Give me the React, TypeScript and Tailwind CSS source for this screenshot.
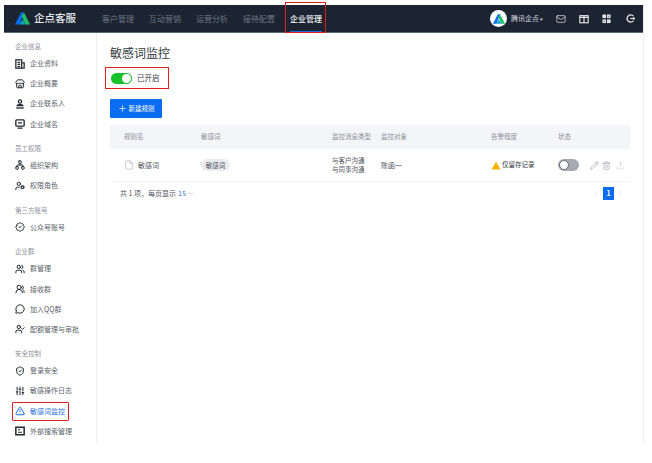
import React from "react";
import {
  Store, Network, UserCog, BadgeCheck, Users, UsersRound, MessageCircle, UserCheck,
  ShieldCheck, SlidersVertical, TriangleAlert, Mail,
  Plus, File, Pencil, Trash2, Upload, ChevronLeft, ChevronRight, ChevronDown,
} from "lucide-react";

const font = "font-['Noto_Sans_CJK_SC','Noto_Sans',sans-serif]";

type IconType = React.ComponentType<{ size?: number; strokeWidth?: number; className?: string }>;

const DocIcon: IconType = ({ size, className }) => (
  <svg width={size} height={size} viewBox="0 0 12 12" className={className} fill="none" stroke="currentColor" strokeWidth="1.5">
    <rect x="1" y="1" width="7" height="10" />
    <path d="M8 4.5 H11 V11 H8 M3 4 H6 M3 6.5 H6 M3 9 H6" />
  </svg>
);
const ContactIcon: IconType = ({ size, className }) => (
  <svg width={size} height={size} viewBox="0 0 12 12" className={className} fill="none" stroke="currentColor" strokeWidth="1.5">
    <circle cx="6" cy="3" r="2" />
    <path d="M2.5 8 C3 6.4 9 6.4 9.5 8 Z" />
    <path d="M1.5 10.8 H10.5" strokeWidth="1.6" />
  </svg>
);
const ScreenIcon: IconType = ({ size, className }) => (
  <svg width={size} height={size} viewBox="0 0 12 12" className={className} fill="none" stroke="currentColor" strokeWidth="1.6">
    <rect x="1" y="1" width="10" height="7.5" rx="1" />
    <path d="M3 11 H9 M3.5 4.7 H8.5" />
  </svg>
);
const SearchBoxIcon: IconType = ({ size, className }) => (
  <svg width={size} height={size} viewBox="0 0 12 12" className={className} fill="none" stroke="currentColor" strokeWidth="1.8">
    <rect x="1" y="1.5" width="10" height="9" />
    <path d="M3.6 4.5 H6 M3.6 7.5 H8.4" strokeWidth="1.2" />
  </svg>
);

const sections: { title: string; items: { label: string; Icon: IconType; active?: boolean }[]; top: string }[] = [
  { title: "企业信息", top: "pt-[8px]", items: [
    { label: "企业资料", Icon: DocIcon },
    { label: "企业概要", Icon: Store },
    { label: "企业联系人", Icon: ContactIcon },
    { label: "企业域名", Icon: ScreenIcon },
  ]},
  { title: "员工权限", top: "pt-[9px]", items: [
    { label: "组织架构", Icon: Network },
    { label: "权限角色", Icon: UserCog },
  ]},
  { title: "第三方账号", top: "pt-[9px]", items: [
    { label: "公众号账号", Icon: BadgeCheck },
  ]},
  { title: "企业群", top: "pt-[9px]", items: [
    { label: "群管理", Icon: Users },
    { label: "接收群", Icon: UsersRound },
    { label: "加入QQ群", Icon: MessageCircle },
    { label: "配额管理与审批", Icon: UserCheck },
  ]},
  { title: "安全控制", top: "pt-[9px]", items: [
    { label: "登录安全", Icon: ShieldCheck },
    { label: "敏感操作日志", Icon: SlidersVertical },
    { label: "敏感词监控", Icon: TriangleAlert, active: true },
    { label: "外部搜索管理", Icon: SearchBoxIcon },
  ]},
];

function Logo({ size }: { size: number }) {
  return (
    <svg width={size} height={size} viewBox="0 0 20 20">
      <path d="M0 18 L8 2 H12 L6 18 Z" fill="#0a6cf0" />
      <path d="M12 2 L20 18 H14 L9 7 Z" fill="#1fc16b" />
      <path d="M6 18 L10 11 L14 18 Z" fill="#0fa3c9" />
    </svg>
  );
}

const grid = "grid grid-cols-[91px_131px_49px_110px_67px_1fr] pl-[14px] items-center";

export default function App() {
  return (
    <div className={`w-[652px] h-[463px] overflow-hidden bg-white pt-[5px] pl-[4px] ${font}`}>
      <div className="w-[640px] h-[438px] border-r border-[#eceef2] flex flex-col">
        <header className="h-[28px] shrink-0 bg-[#1c2431] border-b border-[#5d6673] flex items-center">
          <div className="pl-[11px] flex items-center w-[98px]">
            <Logo size={15} />
            <span className="ml-[4px] text-[10.5px] leading-none font-medium text-[#e8eaee]">企点客服</span>
          </div>
          <nav className="flex h-full items-center gap-[15px] text-[8px] text-[#6d7683]">
            <span>客户管理</span>
            <span>互动营销</span>
            <span>运营分析</span>
            <span>接待配置</span>
            <div className="relative h-full flex items-center text-[#f2f3f5] font-medium">
              <span>企业管理</span>
              <div className="absolute left-0 right-0 bottom-0 h-[1px] bg-[#1f6fe0]" />
              <div className="absolute -left-[5px] -right-[4px] -top-[3px] bottom-[-1px] border border-[#e0201c]" />
            </div>
          </nav>
          <div className="ml-auto flex items-center pr-[8px]">
            <div className="w-[17px] h-[17px] rounded-full bg-white flex items-center justify-center">
              <Logo size={12} />
            </div>
            <span className="ml-[4px] text-[7px] text-[#d8dbe0] whitespace-nowrap">腾讯企点</span>
            <span className="ml-[1px] text-[5px] text-[#d8dbe0]">▾</span>
            <Mail size={10} strokeWidth={1.7} className="ml-[13px] text-[#e3e5e9]" />
            <svg width="10" height="10" viewBox="0 0 12 12" className="ml-[13px] text-[#e3e5e9]" fill="none" stroke="currentColor" strokeWidth="1.4">
              <rect x="1" y="2" width="10" height="8.5" />
              <path d="M6 2 V10.5 M1 4 H11" />
            </svg>
            <svg width="9" height="10" viewBox="0 0 10 11" className="ml-[13px] text-[#e3e5e9]" fill="currentColor">
              <rect x="0.5" y="0.5" width="4" height="4" />
              <rect x="5.5" y="0.5" width="4" height="4" />
              <rect x="0.5" y="6" width="4" height="4" />
              <rect x="5.5" y="6" width="4" height="4" />
              <rect x="2" y="7.5" width="1" height="1" fill="#1c2431" />
              <rect x="7" y="2" width="1" height="1" fill="#1c2431" />
            </svg>
            <svg width="9" height="9" viewBox="0 0 10 10" className="ml-[15px] text-[#e3e5e9]" fill="none" stroke="currentColor" strokeWidth="1.5">
              <path d="M8.2 2.4 A4 4 0 1 0 8.2 7.6" />
              <path d="M4.5 5 H9.5 M8 3.6 L9.5 5 L8 6.4" strokeWidth="1.2" />
            </svg>
          </div>
        </header>

        <div className="flex flex-1 min-h-0">
          <aside className="w-[93px] shrink-0 border-r border-[#eceef2] pl-[11px]">
            {sections.map((s) => (
              <div key={s.title} className={s.top}>
                <div className="h-[10px] leading-[10px] text-[6.5px] text-[#8b9099]">{s.title}</div>
                <div className="pt-[2.5px]">
                  {s.items.map(({ label, Icon, active }) => (
                    <div key={label} className={`relative h-[20.1px] flex items-center ${active ? "text-[#1f6fe0]" : "text-[#5a5f68]"}`}>
                      <Icon size={10} strokeWidth={2.4} className={active ? "text-[#1f6fe0]" : "text-[#23272e]"} />
                      <span className="ml-[5px] text-[7px] whitespace-nowrap">{label}</span>
                      {active && <div className="absolute left-[-3px] w-[57px] top-[1px] bottom-0 border border-[#e0201c] rounded-[1px]" />}
                    </div>
                  ))}
                </div>
              </div>
            ))}
          </aside>

          <main className="flex-1 pl-[13px] pr-[10px] pt-[11px]">
            <h1 className="text-[12px] leading-[17px] text-[#33373d]">敏感词监控</h1>
            <div className="relative mt-[11px] flex items-center h-[12px] pl-[1px]">
              <div className="w-[21px] h-[11px] rounded-full bg-[#16c22c] flex items-center justify-end pr-[1px]">
                <div className="w-[9px] h-[9px] rounded-full bg-white" />
              </div>
              <span className="ml-[5px] text-[7.5px] text-[#33373d]">已开启</span>
              <div className="absolute -left-[5px] w-[64px] -top-[5px] -bottom-[5px] border border-[#e0201c]" />
            </div>
            <button className="mt-[15px] w-[52px] h-[19px] bg-[#0a6cf0] rounded-[1px] flex items-center justify-center text-[6.5px] text-white">
              <Plus size={9} strokeWidth={2} className="mr-[2px]" />
              新建规则
            </button>

            <div className="mt-[7px] w-[520px]">
              <div className={`h-[24px] bg-[#f4f5f9] ${grid} text-[6.5px] text-[#8b9099]`}>
                <span>规则名</span>
                <span className="ml-[-14px]">敏感词</span>
                <span className="ml-[-14px]">监控消息类型</span>
                <span className="ml-[-14px]">监控对象</span>
                <span className="ml-[-14px]">告警程度</span>
                <span className="ml-[-14px]">状态</span>
              </div>
              <div className={`h-[33px] border-b border-[#f2f3f6] ${grid} text-[6.5px] text-[#50555d]`}>
                <div className="flex items-center">
                  <File size={10} strokeWidth={1.4} className="text-[#a5a9b0]" />
                  <span className="ml-[4px] text-[7px]">敏感词</span>
                </div>
                <div className="ml-[-14px]">
                  <span className="inline-block w-[29px] h-[12px] leading-[12px] text-center rounded-full bg-[#e9ebef] text-[6.5px]">敏感词</span>
                </div>
                <div className="ml-[-14px] leading-[9px]">与客户沟通<br />与同事沟通</div>
                <div className="ml-[-14px] text-[7px]">陈函一</div>
                <div className="ml-[-14px] flex items-center">
                  <svg width="10" height="9" viewBox="0 0 10 10"><path d="M5 .5 L10 9.5 H0 Z" fill="#f7b500" /></svg>
                  <span className="ml-[1px] whitespace-nowrap text-[#33373d]">仅留存记录</span>
                </div>
                <div className="ml-[-14px] flex items-center">
                  <div className="w-[21px] h-[12px] rounded-full bg-[#a6a9b1] flex items-center pl-[1px]">
                    <div className="w-[10px] h-[10px] rounded-full bg-white border border-[#6d7078]" />
                  </div>
                  <Pencil size={9} strokeWidth={1.5} className="ml-[11px] text-[#8f939b]" />
                  <Trash2 size={9} strokeWidth={1.5} className="ml-[3px] text-[#8f939b]" />
                  <Upload size={9} strokeWidth={1.5} className="ml-[5px] text-[#c8cbd1]" />
                </div>
              </div>
              <div className="flex items-center h-[23px] pl-[10px] text-[7px] text-[#50555d]">
                <span>共 1 项，每页显示</span>
                <span className="ml-[2px] text-[#1f6fe0]">15</span>
                <ChevronDown size={7} strokeWidth={1.5} className="ml-[1px] text-[#8b9099]" />
                <div className="ml-auto flex items-center pr-[5px]">
                  <ChevronLeft size={9} strokeWidth={1.5} className="text-[#c8cbd1]" />
                  <span className="mx-[2px] w-[11px] h-[13px] leading-[13px] bg-[#0a6cf0] text-white text-center text-[7px] font-bold">1</span>
                  <ChevronRight size={9} strokeWidth={1.5} className="text-[#c8cbd1]" />
                </div>
              </div>
            </div>
          </main>
        </div>
      </div>
    </div>
  );
}
